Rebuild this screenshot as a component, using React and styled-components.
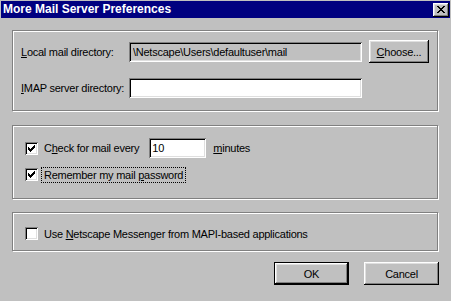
import React from "react";
import styled, { createGlobalStyle, css } from "styled-components";

const GlobalStyle = createGlobalStyle`
  html, body { margin: 0; padding: 0; background: #c0c0c0; }
  body {
    font-family: "Liberation Sans", Arial, sans-serif;
    font-size: 11px;
    letter-spacing: -0.25px;
    color: #000;
  }
  * { box-sizing: border-box; }
`;

const raised = css`
  background: #c0c0c0;
  box-shadow: inset -1px -1px 0 #000, inset 1px 1px 0 #fff,
    inset -2px -2px 0 #808080, inset 2px 2px 0 #dfdfdf;
`;

const sunken = css`
  box-shadow: inset 1px 1px 0 #808080, inset -1px -1px 0 #fff,
    inset 2px 2px 0 #000, inset -2px -2px 0 #dfdfdf;
`;

const Window = styled.div`
  width: 451px;
  height: 301px;
  background: #c0c0c0;
  padding-top: 1px;
  display: flex;
  flex-direction: column;
  overflow: hidden;
`;

const TitleBar = styled.div`
  height: 17px;
  margin: 0 1px;
  background: #000080;
  display: flex;
  align-items: center;
  justify-content: space-between;
  padding-left: 2px;
  padding-right: 1px;
`;

const TitleText = styled.span`
  color: #fff;
  font-weight: bold;
  font-size: 12px;
  letter-spacing: 0;
  line-height: 17px;
`;

const CloseButton = styled.button`
  ${raised};
  width: 16px;
  height: 14px;
  border: none;
  padding: 0;
  display: flex;
  align-items: center;
  justify-content: center;
  padding-right: 1px;
`;

const Body = styled.div`
  padding: 12px 12px 0 12px;
  display: flex;
  flex-direction: column;
`;

const GroupBox = styled.div`
  border: 1px solid #808080;
  box-shadow: inset 1px 1px 0 #fff, 1px 1px 0 #fff;
  margin-right: 1px;
  margin-top: ${(p) => p.$mt || 0}px;
  padding: ${(p) => p.$pad};
  display: flex;
  flex-direction: column;
  gap: ${(p) => p.$gap || 0}px;
`;

const Row = styled.div`
  display: flex;
  align-items: center;
  height: ${(p) => p.$h}px;
`;

const FieldLabel = styled.label`
  width: 108px;
  flex: none;
  white-space: nowrap;
`;

const TextField = styled.input`
  ${sunken};
  width: ${(p) => p.$w}px;
  height: 20px;
  border: none;
  outline: none;
  margin: 0;
  padding: 2px ${(p) => p.$px ?? 4}px;
  font: inherit;
  letter-spacing: inherit;
  color: #000;
  background: ${(p) => (p.readOnly ? "#c0c0c0" : "#fff")};
  margin-left: ${(p) => p.$ml || 0}px;
`;

const PushButton = styled.button`
  ${raised};
  width: ${(p) => p.$w}px;
  height: 23px;
  padding: 0;
  margin-left: ${(p) => p.$ml || 0}px;
  font: inherit;
  letter-spacing: inherit;
  color: #000;
  border: none;
  ${(p) =>
    p.$default &&
    css`
      border: 1px solid #000;
    `}
`;

const CheckBox = styled.span`
  ${sunken};
  width: 13px;
  height: 13px;
  flex: none;
  background: #fff;
  display: flex;
  align-items: flex-start;
  justify-content: flex-start;
  padding: 3px 0 0 3px;
`;

const CheckLabel = styled.span`
  margin-left: 3px;
  padding: 0 2px;
  line-height: 14px;
  white-space: nowrap;
  border: 1px ${(p) => (p.$focused ? "dotted #000" : "solid transparent")};
`;

const Text = styled.span`
  white-space: nowrap;
  margin-left: ${(p) => p.$ml || 0}px;
`;

const U = styled.u`
  text-decoration: underline;
  text-underline-offset: 1px;
`;

const ButtonRow = styled.div`
  display: flex;
  justify-content: flex-end;
  gap: 15px;
  margin-top: 11px;
`;

const CheckMark = () => (
  <svg width="7" height="7" viewBox="0 0 7 7" shapeRendering="crispEdges">
    <path
      fill="#000"
      d="M6 0h1v1h-1z M5 1h2v1h-2z M0 2h1v1h-1z M4 2h3v1h-3z M0 3h2v1h-2z M3 3h3v1h-3z M0 4h5v1h-5z M1 5h3v1h-3z M2 6h1v1h-1z"
    />
  </svg>
);

const CloseGlyph = () => (
  <svg width="8" height="7" viewBox="0 0 8 7" shapeRendering="crispEdges">
    <path
      fill="#000"
      d="M0 0h2v1h-2z M6 0h2v1h-2z M1 1h2v1h-2z M5 1h2v1h-2z M2 2h4v1h-4z M3 3h2v1h-2z M2 4h4v1h-4z M1 5h2v1h-2z M5 5h2v1h-2z M0 6h2v1h-2z M6 6h2v1h-2z"
    />
  </svg>
);

const Check = ({ checked, focused, children }) => (
  <Row $h={17}>
    <CheckBox>{checked && <CheckMark />}</CheckBox>
    <CheckLabel $focused={focused}>{children}</CheckLabel>
  </Row>
);

export default function App() {
  return (
    <>
      <GlobalStyle />
      <Window>
        <TitleBar>
          <TitleText>More Mail Server Preferences</TitleText>
          <CloseButton aria-label="Close">
            <CloseGlyph />
          </CloseButton>
        </TitleBar>
        <Body>
          <GroupBox $pad="9px 8px 12px 8px" $gap={15}>
            <Row $h={23}>
              <FieldLabel>
                <U>L</U>ocal mail directory:
              </FieldLabel>
              <TextField
                $w={233}
                readOnly
                defaultValue="\Netscape\Users\defaultuser\mail"
              />
              <PushButton $w={60} $ml={7}>
                <U>C</U>hoose...
              </PushButton>
            </Row>
            <Row $h={20}>
              <FieldLabel>
                <U>I</U>MAP server directory:
              </FieldLabel>
              <TextField $w={233} defaultValue="" />
            </Row>
          </GroupBox>

          <GroupBox $mt={14} $pad="12px 12px 15px 12px" $gap={8}>
            <Row $h={20}>
              <CheckBox>
                <CheckMark />
              </CheckBox>
              <CheckLabel>
                C<U>h</U>eck for mail every
              </CheckLabel>
              <TextField $w={57} $ml={7} $px={3} defaultValue="10" />
              <Text $ml={7}>
                <U>m</U>inutes
              </Text>
            </Row>
            <Check checked focused>
              Remember my mail <U>p</U>assword
            </Check>
          </GroupBox>

          <GroupBox $mt={13} $pad="12px 12px 8px 12px">
            <Check>
              Use <U>N</U>etscape Messenger from MAPI-based applications
            </Check>
          </GroupBox>

          <ButtonRow>
            <PushButton $w={75} $default>
              OK
            </PushButton>
            <PushButton $w={75}>Cancel</PushButton>
          </ButtonRow>
        </Body>
      </Window>
    </>
  );
}
